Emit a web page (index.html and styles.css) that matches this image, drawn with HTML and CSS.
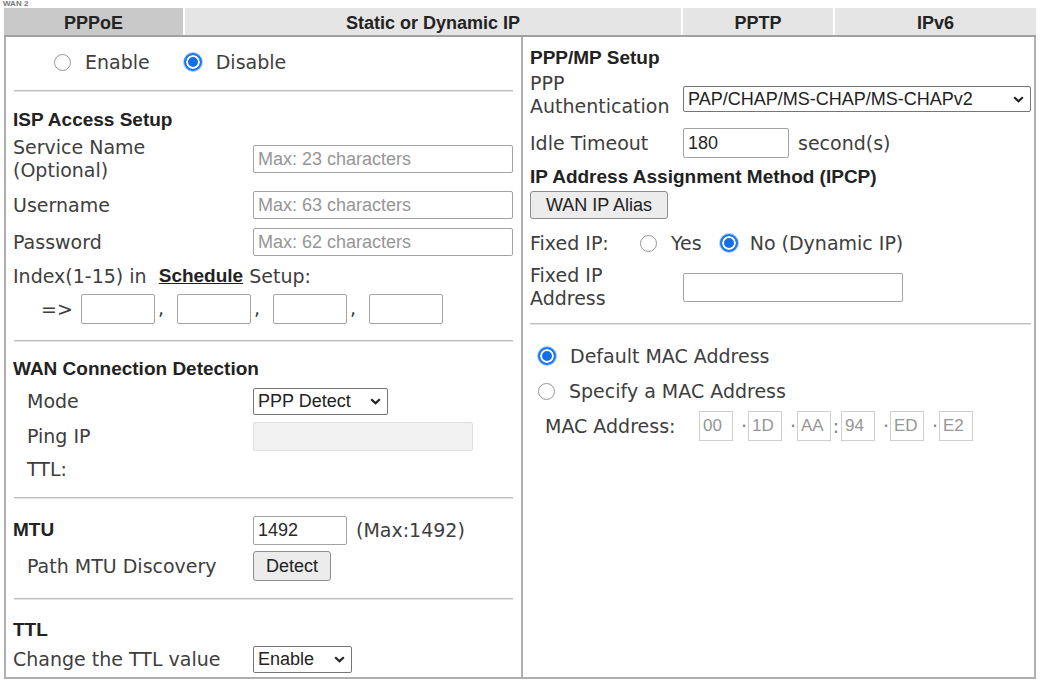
FILE: index.html
```html
<!DOCTYPE html>
<html lang="en">
  <head>
    <meta charset="UTF-8"/>
    <meta name="viewport" content="width=device-width, initial-scale=1.0">
    <title>WAN 2 - PPPoE</title>
    <link rel="stylesheet" href="styles.css">
  </head>
  <body>
    <div class="caption">WAN 2</div>
    <div class="wan">
      <div class="tabs">
        <div class="tab tab_active">PPPoE</div>
        <div class="tab">Static or Dynamic IP</div>
        <div class="tab">PPTP</div>
        <div class="tab">IPv6</div>
      </div>
      <div class="panel">
        <!-- left side -->
        <div class="column column_left">
          <div class="row row_radio">
            <label class="radio radio_enable"><input type="radio" name="pppoe"> Enable</label>
            <label class="radio radio_disable"><input type="radio" name="pppoe" checked> Disable</label>
          </div>
          <hr class="divider">
          <div class="heading heading_isp">ISP Access Setup</div>
          <div class="row row_service">
            <div class="label">Service Name<br>(Optional)</div>
            <input class="field field_wide" type="text" placeholder="Max: 23 characters">
          </div>
          <div class="row row_user">
            <div class="label">Username</div>
            <input class="field field_wide" type="text" placeholder="Max: 63 characters">
          </div>
          <div class="row row_pass">
            <div class="label">Password</div>
            <input class="field field_wide" type="password" placeholder="Max: 62 characters">
          </div>
          <div class="row row_index">
            Index(1-15) in&nbsp;&nbsp;<a class="link" href="#">Schedule</a>&nbsp;Setup:
          </div>
          <div class="row row_arrow">
            <span class="arrow">=&gt;</span>
            <input class="field field_index" type="text"><span class="comma">,</span>
            <input class="field field_index" type="text"><span class="comma">,</span>
            <input class="field field_index" type="text"><span class="comma">,</span>
            <input class="field field_index" type="text">
          </div>
          <hr class="divider divider_wan">
          <div class="heading heading_wan">WAN Connection Detection</div>
          <div class="row row_mode">
            <div class="label label_indent">Mode</div>
            <span class="select_wrap">
              <select class="select select_mode">
                <option>PPP Detect</option>
                <option>Ping Detect</option>
              </select>
              <svg class="chevron" width="11" height="7" viewBox="0 0 11 7"><path d="M1.2 1.2 L5.5 5.3 L9.8 1.2" fill="none" stroke="#222" stroke-width="2.2"/></svg>
            </span>
          </div>
          <div class="row row_ping">
            <div class="label label_indent">Ping IP</div>
            <input class="field field_ip field_disabled" type="text" disabled>
          </div>
          <div class="row row_ttl">
            <div class="label label_indent">TTL:</div>
          </div>
          <hr class="divider divider_mtu">
          <div class="row row_mtu">
            <div class="label label_bold">MTU</div>
            <input class="field field_mtu" type="text" value="1492">
            <span class="unit">(Max:1492)</span>
          </div>
          <div class="row row_path">
            <div class="label label_indent">Path MTU Discovery</div>
            <button class="button button_detect">Detect</button>
          </div>
          <hr class="divider divider_ttl">
          <div class="heading heading_ttl">TTL</div>
          <div class="row row_change">
            <div class="label">Change the TTL value</div>
            <span class="select_wrap">
              <select class="select select_ttl">
                <option>Enable</option>
                <option>Disable</option>
              </select>
              <svg class="chevron" width="11" height="7" viewBox="0 0 11 7"><path d="M1.2 1.2 L5.5 5.3 L9.8 1.2" fill="none" stroke="#222" stroke-width="2.2"/></svg>
            </span>
          </div>
        </div>

        <!-- right side -->
        <div class="column column_right">
          <div class="heading">PPP/MP Setup</div>
          <div class="row row_auth">
            <div class="label label_right">PPP<br>Authentication</div>
            <span class="select_wrap select_wrap_auth">
              <select class="select select_auth">
                <option>PAP/CHAP/MS-CHAP/MS-CHAPv2</option>
                <option>PAP Only</option>
              </select>
              <svg class="chevron" width="11" height="7" viewBox="0 0 11 7"><path d="M1.2 1.2 L5.5 5.3 L9.8 1.2" fill="none" stroke="#222" stroke-width="2.2"/></svg>
            </span>
          </div>
          <div class="row row_idle">
            <div class="label label_right">Idle Timeout</div>
            <input class="field field_short" type="text" value="180">
            <span class="unit">second(s)</span>
          </div>
          <div class="heading heading_ipcp">IP Address Assignment Method (IPCP)</div>
          <div class="row row_alias">
            <button class="button button_alias">WAN IP Alias</button>
          </div>
          <div class="row row_fixed">
            <span class="fixed_label">Fixed IP:</span>
            <label class="radio radio_yes"><input type="radio" name="fixedip"> Yes</label>
            <label class="radio radio_no"><input type="radio" name="fixedip" checked> No (Dynamic IP)</label>
          </div>
          <div class="row row_address">
            <div class="label label_right">Fixed IP<br>Address</div>
            <input class="field field_ip" type="text">
          </div>
          <hr class="divider divider_right">
          <div class="row row_default">
            <label class="radio radio_mac"><input type="radio" name="mac" checked> Default MAC Address</label>
          </div>
          <div class="row row_specify">
            <label class="radio radio_mac"><input type="radio" name="mac"> Specify a MAC Address</label>
          </div>
          <div class="row row_mac">
            <span class="mac_label">MAC Address:</span>
            <input class="mac" type="text" value="00" disabled><span class="mac_sep">·</span>
            <input class="mac" type="text" value="1D" disabled><span class="mac_sep">·</span>
            <input class="mac" type="text" value="AA" disabled><span class="mac_sep mac_sep_colon">:</span>
            <input class="mac" type="text" value="94" disabled><span class="mac_sep">·</span>
            <input class="mac" type="text" value="ED" disabled><span class="mac_sep">·</span>
            <input class="mac" type="text" value="E2" disabled>
          </div>
        </div>
      </div>
    </div>
  </body>
</html>
```

FILE: styles.css
```css
body {
  margin: 0;
  background-color: white;
  font-family: "DejaVu Sans", Verdana, sans-serif;
  font-size: 19px;
  color: rgb(62, 62, 62);
}
.caption {
  height: 8px;
  line-height: 7px;
  padding-left: 3px;
  font: bold 8px/7px "Liberation Sans", Arial, sans-serif;
  color: rgb(120, 120, 120);
  overflow: hidden;
}

/* tabs */
.wan {
  margin: 0 4px;
}
.tabs {
  display: grid;
  grid-template-columns: 179px 496px 150px 1fr;
  column-gap: 2px;
  height: 27px;
  border-bottom: 2px solid rgb(160, 160, 160);
}
.tab {
  display: flex;
  align-items: center;
  justify-content: center;
  padding-top: 3px;
  background-color: rgb(229, 229, 229);
  font: bold 18px "Liberation Sans", Arial, sans-serif;
  color: rgb(35, 35, 35);
}
.tab_active {
  background-color: rgb(201, 201, 201);
}

/* panel */
.panel {
  display: grid;
  grid-template-columns: 517px 1fr;
  height: 640px;
  border: 2px solid rgb(175, 175, 175);
  border-top: 0;
}
.column {
  padding: 8px 0 0 7px;
}
.column_left {
  border-right: 2px solid rgb(175, 175, 175);
}
.divider {
  border: 0;
  border-top: 1px solid rgb(190, 190, 190);
  border-bottom: 1px solid rgb(228, 228, 228);
  margin: 11px 8px 0 1px;
}
.divider_wan {
  margin-top: 15px;
}
.divider_mtu {
  margin-top: 11px;
}
.divider_ttl {
  margin-top: 13px;
}
.divider_right {
  margin: 15px 3px 0 0;
}

.heading {
  display: flex;
  align-items: center;
  height: 26px;
  font: bold 19px "Liberation Sans", Arial, sans-serif;
  color: rgb(34, 34, 34);
}
.heading_isp {
  margin-top: 15px;
}
.heading_wan {
  margin-top: 14px;
}
.heading_ttl {
  margin-top: 17px;
}
.heading_ipcp {
  margin-top: 3px;
}

.row {
  display: flex;
  align-items: center;
  white-space: nowrap;
}
.row_radio { height: 34px; }
.row_service { height: 52px; }
.row_user { height: 40px; }
.row_pass { height: 34px; }
.row_index { height: 34px; }
.row_arrow { height: 32px; }
.row_mode { height: 38px; }
.row_ping { height: 32px; }
.row_ttl { height: 34px; }
.row_mtu { height: 34px; margin-top: 14px; }
.row_path { height: 38px; }
.row_change { height: 32px; }

.row_auth { height: 48px; }
.row_idle { height: 36px; margin-top: 6px; }
.row_alias { height: 30px; }
.row_fixed { height: 46px; }
.row_address { height: 42px; }
.row_default { height: 30px; margin-top: 16px; }
.row_specify { height: 40px; }
.row_mac { height: 30px; padding-left: 15px; }

.label {
  box-sizing: border-box;
  width: 240px;
  flex: none;
  line-height: 23px;
}
.label_indent {
  padding-left: 14px;
}
.label_bold {
  font: bold 19px "Liberation Sans", Arial, sans-serif;
  color: rgb(34, 34, 34);
}
.label_right {
  width: 153px;
}

/* radios */
.radio {
  display: flex;
  align-items: center;
}
.radio input {
  appearance: none;
  box-sizing: border-box;
  width: 17px;
  height: 17px;
  margin: 0 14px 0 0;
  border: 1px solid rgb(150, 150, 150);
  border-radius: 50%;
  background-color: white;
}
.radio input:checked {
  width: 18px;
  height: 18px;
  border: 2px solid rgb(30, 120, 235);
  background-color: rgb(22, 110, 230);
  box-shadow: inset 0 0 0 2px white, 0 0 0 1px rgb(170, 205, 250);
}
.radio_enable {
  margin-left: 41px;
}
.radio_disable {
  margin-left: 34px;
}
.fixed_label {
  width: 110px;
}
.radio_yes input {
  margin-right: 14px;
}
.radio_no {
  margin-left: 18px;
}
.radio_no input {
  margin-right: 12px;
}
.radio_mac {
  margin-left: 8px;
}

/* inputs */
.field {
  box-sizing: border-box;
  height: 28px;
  padding: 0 4px;
  border: 1px solid rgb(163, 163, 163);
  border-radius: 2px;
  font: 18px "Liberation Sans", Arial, sans-serif;
  color: rgb(40, 40, 40);
  background-color: white;
}
.field::placeholder {
  color: rgb(150, 150, 150);
}
.field_wide {
  width: 260px;
}
.field_index {
  width: 74px;
  height: 30px;
}
.field_ip {
  width: 220px;
  height: 29px;
}
.field_disabled {
  background-color: rgb(242, 242, 242);
  border-color: rgb(222, 222, 222);
}
.field_mtu {
  width: 94px;
  height: 29px;
}
.field_short {
  width: 106px;
  height: 30px;
}
.unit {
  margin-left: 9px;
}
.arrow {
  margin-left: 28px;
  width: 40px;
}
.comma {
  width: 22px;
  align-self: flex-end;
  padding: 0 0 6px 3px;
  box-sizing: border-box;
}
.link {
  font: bold 19px "Liberation Sans", Arial, sans-serif;
  color: rgb(34, 34, 34);
  text-decoration: underline;
}

/* selects */
.select_wrap {
  position: relative;
  display: flex;
}
.select_wrap_auth {
  margin-top: 8px;
}
.select {
  appearance: none;
  box-sizing: border-box;
  height: 27px;
  padding: 0 22px 0 4px;
  border: 1px solid rgb(118, 118, 118);
  border-radius: 2px;
  font: 18px "Liberation Sans", Arial, sans-serif;
  color: rgb(34, 34, 34);
  background-color: white;
}
.chevron {
  position: absolute;
  right: 7px;
  top: 10px;
  pointer-events: none;
}
.select_mode {
  width: 135px;
}
.select_ttl {
  width: 99px;
}
.select_auth {
  width: 348px;
  height: 26px;
}

.button {
  height: 29px;
  padding: 0 8px;
  border: 1px solid rgb(140, 140, 140);
  border-radius: 3px;
  background-color: rgb(236, 236, 236);
  font: 18px "Liberation Sans", Arial, sans-serif;
  color: rgb(34, 34, 34);
}
.button_detect {
  width: 78px;
  height: 30px;
}
.button_alias {
  width: 138px;
  height: 28px;
}

/* mac address */
.mac_label {
  width: 154px;
}
.mac {
  box-sizing: border-box;
  width: 34px;
  height: 30px;
  padding: 0 3px;
  border: 1px solid rgb(207, 207, 207);
  font: 17px "Liberation Sans", Arial, sans-serif;
  color: rgb(150, 150, 150);
  background-color: white;
}
.mac_sep {
  width: 15px;
  text-align: right;
  padding-right: 1px;
  box-sizing: border-box;
  color: rgb(130, 130, 130);
}
.mac_sep_colon {
  width: 10px;
  padding-right: 0;
  text-align: center;
}
```
